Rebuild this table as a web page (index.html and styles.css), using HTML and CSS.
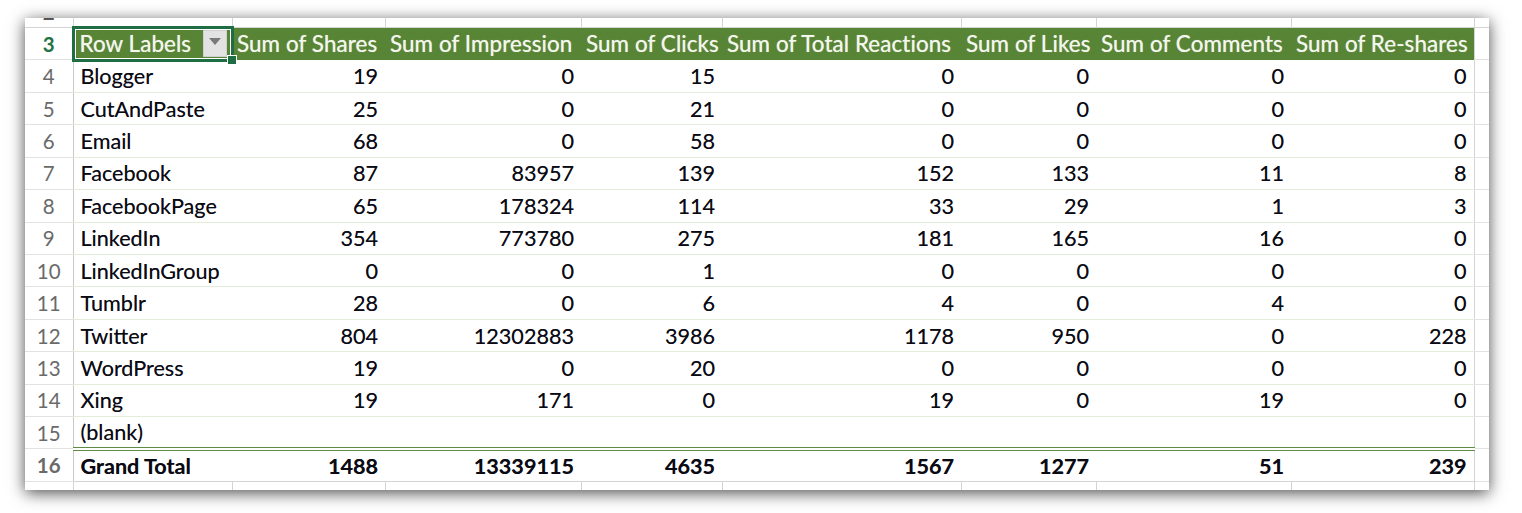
FILE: index.html
```html
<!DOCTYPE html>
<html>
<head>
<meta charset="utf-8">
<link rel="stylesheet" href="styles.css">
</head>
<body>
<div class="frame">
<table class="sheet">
<colgroup>
<col class="c-rh"><col class="c-a"><col class="c-b"><col class="c-c"><col class="c-d"><col class="c-e"><col class="c-f"><col class="c-g"><col class="c-h"><col class="c-i">
</colgroup>
<tr class="r-partial-top">
<td class="rh"><div class="clip"><span class="clip-text">2</span></div></td>
<td class="gv"></td><td class="gv"></td><td class="gv"></td><td class="gv"></td><td class="gv"></td><td class="gv"></td><td class="gv"></td><td class="gv"></td><td></td>
</tr>
<tr class="r-head">
<td class="rh rh-active">3</td>
<td class="hd hd-sel"><div class="sel-cell"><span>Row Labels</span><span class="dd"><span class="tri"></span></span></div><div class="sel-box"><span class="handle"></span></div></td>
<td class="hd">Sum of Shares</td>
<td class="hd">Sum of Impression</td>
<td class="hd">Sum of Clicks</td>
<td class="hd">Sum of Total Reactions</td>
<td class="hd">Sum of Likes</td>
<td class="hd">Sum of Comments</td>
<td class="hd">Sum of Re-shares</td>
<td class="out"></td>
</tr>
<tr><td class="rh">4</td><td class="lb">Blogger</td><td class="n">19</td><td class="n">0</td><td class="n">15</td><td class="n">0</td><td class="n">0</td><td class="n">0</td><td class="n">0</td><td class="out"></td></tr>
<tr><td class="rh">5</td><td class="lb">CutAndPaste</td><td class="n">25</td><td class="n">0</td><td class="n">21</td><td class="n">0</td><td class="n">0</td><td class="n">0</td><td class="n">0</td><td class="out"></td></tr>
<tr><td class="rh">6</td><td class="lb">Email</td><td class="n">68</td><td class="n">0</td><td class="n">58</td><td class="n">0</td><td class="n">0</td><td class="n">0</td><td class="n">0</td><td class="out"></td></tr>
<tr><td class="rh">7</td><td class="lb">Facebook</td><td class="n">87</td><td class="n">83957</td><td class="n">139</td><td class="n">152</td><td class="n">133</td><td class="n">11</td><td class="n">8</td><td class="out"></td></tr>
<tr><td class="rh">8</td><td class="lb">FacebookPage</td><td class="n">65</td><td class="n">178324</td><td class="n">114</td><td class="n">33</td><td class="n">29</td><td class="n">1</td><td class="n">3</td><td class="out"></td></tr>
<tr><td class="rh">9</td><td class="lb">LinkedIn</td><td class="n">354</td><td class="n">773780</td><td class="n">275</td><td class="n">181</td><td class="n">165</td><td class="n">16</td><td class="n">0</td><td class="out"></td></tr>
<tr><td class="rh">10</td><td class="lb">LinkedInGroup</td><td class="n">0</td><td class="n">0</td><td class="n">1</td><td class="n">0</td><td class="n">0</td><td class="n">0</td><td class="n">0</td><td class="out"></td></tr>
<tr><td class="rh">11</td><td class="lb">Tumblr</td><td class="n">28</td><td class="n">0</td><td class="n">6</td><td class="n">4</td><td class="n">0</td><td class="n">4</td><td class="n">0</td><td class="out"></td></tr>
<tr><td class="rh">12</td><td class="lb">Twitter</td><td class="n">804</td><td class="n">12302883</td><td class="n">3986</td><td class="n">1178</td><td class="n">950</td><td class="n">0</td><td class="n">228</td><td class="out"></td></tr>
<tr><td class="rh">13</td><td class="lb">WordPress</td><td class="n">19</td><td class="n">0</td><td class="n">20</td><td class="n">0</td><td class="n">0</td><td class="n">0</td><td class="n">0</td><td class="out"></td></tr>
<tr><td class="rh">14</td><td class="lb">Xing</td><td class="n">19</td><td class="n">171</td><td class="n">0</td><td class="n">19</td><td class="n">0</td><td class="n">19</td><td class="n">0</td><td class="out"></td></tr>
<tr><td class="rh">15</td><td class="lb">(blank)</td><td class="n"></td><td class="n"></td><td class="n"></td><td class="n"></td><td class="n"></td><td class="n"></td><td class="n"></td><td class="out"></td></tr>
<tr class="r-total"><td class="rh">16</td><td class="lb">Grand Total</td><td class="n">1488</td><td class="n">13339115</td><td class="n">4635</td><td class="n">1567</td><td class="n">1277</td><td class="n">51</td><td class="n">239</td><td class="out"></td></tr>
<tr class="r-partial-bottom">
<td class="rh"></td><td class="gv"></td><td class="gv"></td><td class="gv"></td><td class="gv"></td><td class="gv"></td><td class="gv"></td><td class="gv"></td><td class="gv"></td><td></td>
</tr>
</table>
</div>
</body>
</html>
```

FILE: styles.css
```css
html, body {
  margin: 0;
  padding: 0;
  background: #ffffff;
}

body {
  padding-bottom: 30px;
}

.frame {
  margin: 18px 0 0 25px;
  width: 1464px;
  height: 472px;
  overflow: hidden;
  background: #ffffff;
  box-shadow: 0 3px 15px rgba(0, 0, 0, 0.7);
}

.sheet {
  border-collapse: collapse;
  table-layout: fixed;
  width: 1464px;
  font-family: "Lato", "Open Sans", sans-serif;
  font-size: 21.6px;
  color: #0a0a14;
  text-shadow: 0 0 0.6px rgba(10, 10, 20, 0.55);
}

.c-rh { width: 48px; }
.c-a { width: 159px; }
.c-b { width: 153px; }
.c-c { width: 196px; }
.c-d { width: 141px; }
.c-e { width: 239px; }
.c-f { width: 135px; }
.c-g { width: 195px; }
.c-h { width: 183px; }
.c-i { width: 15px; }

.sheet td {
  padding: 0 7px;
  height: 32.43px;
  white-space: nowrap;
  overflow: visible;
  border-bottom: 1px solid #e3edda;
  box-sizing: border-box;
}

.sheet tr.r-partial-top td {
  height: 9px;
  padding: 0;
  border-right: 1px solid #d4d4d4;
  border-bottom: 1px solid #d4d4d4;
}

.sheet tr.r-partial-bottom td {
  height: 10px;
  padding: 0;
  border-right: 1px solid #d4d4d4;
  border-top: 1px solid #d4d4d4;
  border-bottom: none;
}

.sheet tr.r-partial-top td:last-child,
.sheet tr.r-partial-bottom td:last-child {
  border-right: none;
}

.clip {
  height: 9px;
  overflow: hidden;
  text-align: center;
}

.clip-text {
  display: block;
  line-height: 32px;
  margin-top: -22px;
  color: #555555;
  font-weight: 700;
}

.sheet td.rh {
  padding: 0;
  text-align: center;
  color: #6a6a6a;
  font-size: 20.5px;
  text-shadow: none;
  border-right: 1px solid #c9c9c9;
  border-bottom: 1px solid #e2e2e2;
  background: #ffffff;
}

.sheet td.rh-active {
  color: #217346;
  font-weight: 700;
}

.sheet td.hd {
  background: #588535;
  color: #f3f6ec;
  padding: 0 5px;
  font-size: 22.4px;
  letter-spacing: 0.1px;
  text-shadow: 0 0 0.7px rgba(243, 246, 236, 0.8);
  border-bottom: none;
}

.sheet td.hd-sel {
  position: relative;
  padding: 0 6px 0 6px;
}

.sel-cell {
  display: flex;
  align-items: center;
  justify-content: space-between;
}

.dd {
  width: 24px;
  height: 27px;
  background: #e3e3e3;
  border: 1px solid #cfcfcf;
  box-sizing: border-box;
  display: flex;
  align-items: center;
  justify-content: center;
  margin-right: -1px;
}

.tri {
  width: 0;
  height: 0;
  border-left: 6px solid transparent;
  border-right: 6px solid transparent;
  border-top: 7px solid #7a7a7a;
  margin-top: -4px;
}

.sel-box {
  position: absolute;
  left: -2px;
  top: -2px;
  right: -2px;
  bottom: -2px;
  border: 3px solid #1f6e43;
  box-shadow: inset 0 0 0 1px #ffffff;
  pointer-events: none;
}

.handle {
  position: absolute;
  right: -6px;
  bottom: -6px;
  width: 8px;
  height: 8px;
  background: #1f6e43;
  border: 1px solid #ffffff;
}

.sheet td.lb {
  text-align: left;
}

.sheet td.n {
  text-align: right;
}

.sheet td.out {
  padding: 0;
  border-left: 1px solid #d4d4d4;
  border-bottom: 1px solid #e2e2e2;
  background: #ffffff;
}

.r-total td {
  font-weight: 700;
}

.r-total td.lb,
.r-total td.n {
  border-top: 4px double #5f8c42;
  border-bottom: 1px solid #d4d4d4;
}
```
